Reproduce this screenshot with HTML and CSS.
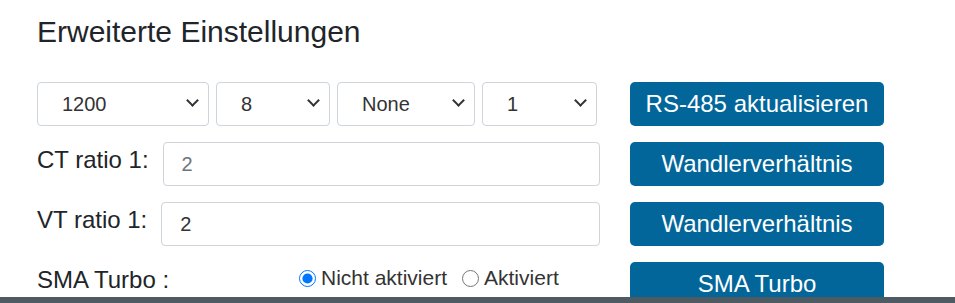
FILE: index.html
```html
<!DOCTYPE html>
<html lang="de">
<head>
  <meta charset="UTF-8" />
  <meta name="viewport" content="width=device-width, initial-scale=1" />
  <title>Erweiterte Einstellungen</title>
  <link rel="stylesheet" href="styles.css">
</head>
<body>
  <div class="page">
    <h4 class="title">Erweiterte Einstellungen</h4>

    <div class="row">
      <div class="fields selects">
        <div class="select-wrap baud">
          <select id="rs-baud">
            <option>1200</option>
            <option>2400</option>
            <option>4800</option>
            <option>9600</option>
          </select>
        </div>
        <div class="select-wrap bits">
          <select id="rs-bits">
            <option>8</option>
            <option>7</option>
          </select>
        </div>
        <div class="select-wrap parity">
          <select id="rs-parity">
            <option>None</option>
            <option>Even</option>
            <option>Odd</option>
          </select>
        </div>
        <div class="select-wrap stop">
          <select id="rs-stop">
            <option>1</option>
            <option>2</option>
          </select>
        </div>
      </div>
      <button class="btn" type="button">RS-485 aktualisieren</button>
    </div>

    <div class="row">
      <div class="fields">
        <label class="field-label" for="ct-ratio">CT ratio 1:</label>
        <input class="field-input" type="text" id="ct-ratio" placeholder="2" />
      </div>
      <button class="btn" type="button">Wandlerverhältnis</button>
    </div>

    <div class="row">
      <div class="fields">
        <label class="field-label" for="vt-ratio">VT ratio 1:</label>
        <input class="field-input" type="text" id="vt-ratio" value="2" />
      </div>
      <button class="btn" type="button">Wandlerverhältnis</button>
    </div>

    <div class="row">
      <div class="fields">
        <span class="field-label turbo-label">SMA Turbo :</span>
        <div class="radios">
          <label class="radio"><input type="radio" name="sma-turbo" checked /> Nicht aktiviert</label>
          <label class="radio"><input type="radio" name="sma-turbo" /> Aktiviert</label>
        </div>
      </div>
      <button class="btn" type="button">SMA Turbo</button>
    </div>
  </div>

  <div class="footer-bar"></div>
</body>
</html>
```

FILE: styles.css
```css
body {
  margin: 0;
  font-family: "Liberation Sans", Arial, sans-serif;
  color: #212529;
  background: #fff;
}
.page {
  padding: 14px 0 0 37px;
}
.title {
  margin: 0 0 32px;
  font-size: 30px;
  font-weight: normal;
  line-height: 36px;
}
.row {
  display: flex;
  gap: 30px;
  margin-bottom: 16px;
}
.fields {
  display: flex;
  align-items: flex-start;
  width: 563px;
}
.selects {
  gap: 7px;
}
.select-wrap {
  position: relative;
  height: 44px;
}
.select-wrap.baud { width: 172px; }
.select-wrap.bits { width: 114px; }
.select-wrap.parity { width: 138px; }
.select-wrap.stop { width: 115px; }
.select-wrap select {
  appearance: none;
  width: 100%;
  height: 100%;
  padding: 0 24px;
  font-family: inherit;
  font-size: 20px;
  color: #333;
  background: #fff;
  border: 1px solid #ced4da;
  border-radius: 4px;
}
/* chevron drawn over the select */
.select-wrap::after {
  content: "";
  position: absolute;
  right: 12px;
  top: 14px;
  width: 7px;
  height: 7px;
  border-right: 2px solid #333;
  border-bottom: 2px solid #333;
  transform: rotate(45deg);
  pointer-events: none;
}
.field-label {
  font-size: 24px;
  line-height: 36px;
  margin-right: 14px;
}
.turbo-label {
  width: 248px;
  flex: none;
}
.field-input {
  flex: 1;
  height: 44px;
  box-sizing: border-box;
  padding: 0 18px;
  font-family: inherit;
  font-size: 20px;
  color: #333;
  border: 1px solid #ced4da;
  border-radius: 4px;
}
.field-input::placeholder {
  color: #6c757d;
}
.radios {
  display: flex;
  align-items: center;
  gap: 15px;
  height: 28px;
  padding-top: 2px;
  font-size: 21px;
}
.radio {
  display: flex;
  align-items: center;
  gap: 5px;
  color: #333;
}
.radio input {
  width: 17px;
  height: 17px;
  margin: 0;
}
.btn {
  width: 254px;
  height: 44px;
  padding: 0;
  font-family: inherit;
  font-size: 24px;
  color: #fff;
  background: #03669a;
  border: none;
  border-radius: 5px;
  cursor: pointer;
}
.footer-bar {
  position: fixed;
  left: 0;
  right: 0;
  bottom: 0;
  height: 6px;
  background: #4f5b62;
}
```
